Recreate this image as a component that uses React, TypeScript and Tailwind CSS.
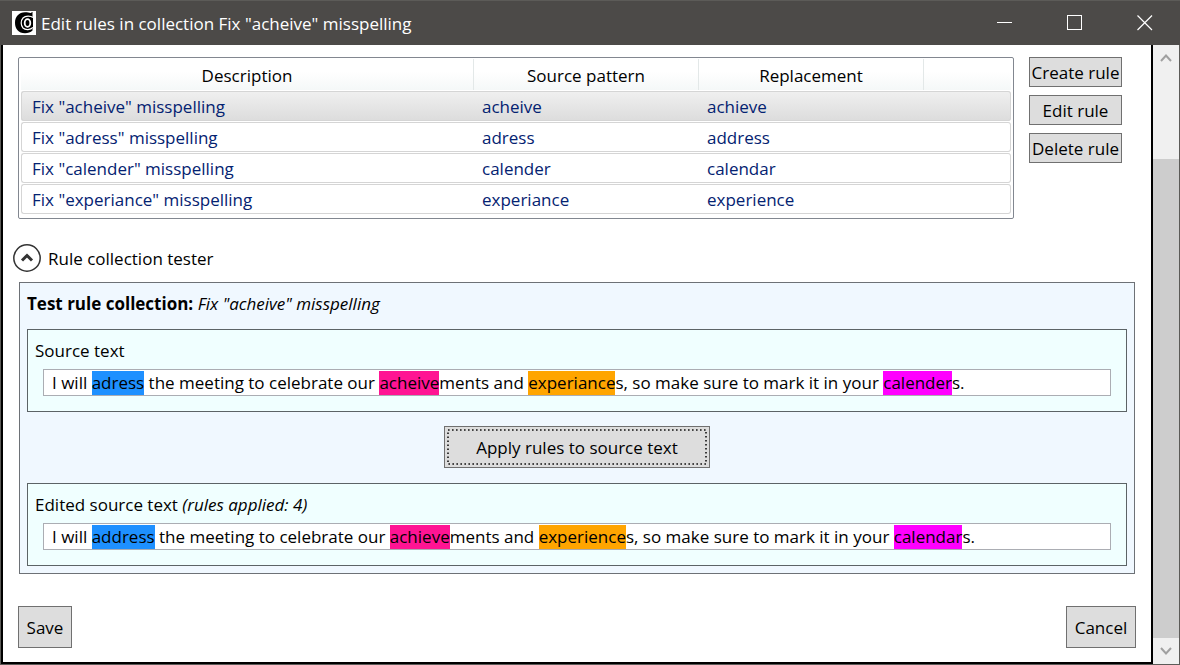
import { useState, type ReactNode } from "react";

const rules = [
  { description: 'Fix "acheive" misspelling', source: "acheive", replacement: "achieve" },
  { description: 'Fix "adress" misspelling', source: "adress", replacement: "address" },
  { description: 'Fix "calender" misspelling', source: "calender", replacement: "calendar" },
  { description: 'Fix "experiance" misspelling', source: "experiance", replacement: "experience" },
];

function AppIcon() {
  return (
    <svg viewBox="0 0 24 24" className="size-6 shrink-0 bg-white" aria-hidden="true">
      <path
        d="M20.500 1V7H10V17.500H20.500V19.500C18.500 21.500 16 22.200 13 22.200C6.500 22.200 3 18 3 11.800C3 5.500 7 1.300 13 1.300C15.500 1.300 17 2 18.500 2C19.300 2 19.700 1.500 19.800 1Z"
        fill="#000"
      />
      <path d="M9 6H21V18H9Z" fill="#000" />
      <path
        d="M21 6.500C19 4.800 13.500 4.300 11 7C8.500 9.800 8.700 14.500 11 17C13.500 19.500 18.500 19 21 16.500"
        fill="none"
        stroke="#fff"
        strokeWidth="1.200"
      />
      <ellipse cx="15.500" cy="12" rx="2.800" ry="3.800" fill="none" stroke="#fff" strokeWidth="1.800" />
    </svg>
  );
}

function TitleBar() {
  const button = "flex w-[70px] items-center justify-center self-stretch";
  return (
    <header className="flex h-[45px] shrink-0 items-center border-t border-[#5c5b58] bg-[#4c4a48] pl-3 text-white">
      <AppIcon />
      <h1 className="ml-[5px] flex-1 whitespace-nowrap pt-px">Edit rules in collection Fix "acheive" misspelling</h1>
      <button type="button" aria-label="Minimize" className={button}>
        <svg viewBox="0 0 16 16" className="size-4" shapeRendering="crispEdges">
          <path d="M0 7.500H15" stroke="#fff" />
        </svg>
      </button>
      <button type="button" aria-label="Maximize" className={button}>
        <svg viewBox="0 0 16 16" className="size-4" shapeRendering="crispEdges">
          <path d="M-.5.5h14v14H-.5z" fill="none" stroke="#fff" overflow="visible" transform="translate(.5 0)" />
        </svg>
      </button>
      <button type="button" aria-label="Close" className={button}>
        <svg viewBox="0 0 16 16" className="size-4">
          <path d="M.5.5l14.500 14.500M15 .5L.5 15" stroke="#fff" strokeWidth="1.200" />
        </svg>
      </button>
    </header>
  );
}

function RuleTable() {
  const [selected, setSelected] = useState(0);
  const head = "h-[31px] border-r border-[#e3e8e8] p-0 pt-0.5 text-center font-normal";
  const cell = "h-[30px] border-y border-[#d5d5d5] p-0 pt-px pl-2";
  return (
    <div className="min-w-0 flex-1 rounded-xs border border-[#828790] px-0.5 pb-[3px]">
      <table className="w-full table-fixed border-separate border-spacing-x-0 border-spacing-y-px">
        <colgroup>
          <col className="w-[453px]" />
          <col className="w-[225px]" />
          <col className="w-[225px]" />
          <col />
        </colgroup>
        <thead>
          <tr className="bg-linear-to-b from-white from-40% to-[#f5f8f8]">
            <th scope="col" className={head}>Description</th>
            <th scope="col" className={head}>Source pattern</th>
            <th scope="col" className={head}>Replacement</th>
            <td />
          </tr>
        </thead>
        <tbody className="text-[#042271]">
          {rules.map((rule, i) => (
            <tr
              key={rule.source}
              onClick={() => setSelected(i)}
              aria-selected={i === selected}
              className={i === selected ? "bg-linear-to-b from-[#f0f0f0] to-[#dcdcdc]" : "bg-white"}
            >
              <td className="h-[30px] rounded-l-[3px] border-y border-l border-[#d5d5d5] p-0 pt-px pl-2.5">
                {rule.description}
              </td>
              <td className={cell}>{rule.source}</td>
              <td className={cell}>{rule.replacement}</td>
              <td className={cell + " rounded-r-[3px] border-r"} />
            </tr>
          ))}
        </tbody>
      </table>
    </div>
  );
}

function SideButton({ children }: { children: ReactNode }) {
  return (
    <button
      type="button"
      className="flex h-[30px] items-center justify-center whitespace-nowrap border border-[#707070] bg-[#dddddd] pt-0.5"
    >
      {children}
    </button>
  );
}

function Highlight({ color, children }: { color: string; children: ReactNode }) {
  return <mark className={"inline-block h-6 text-black " + color}>{children}</mark>;
}

function TextPanel({ id, label, editable, words }: {
  id: string;
  label: ReactNode;
  editable: boolean;
  words: [string, string, string, string];
}) {
  return (
    <section className="border border-[#5c6366] bg-[#f0ffff] px-[7px] pt-[9px] pb-[15px]">
      <div id={id} className="leading-6">{label}</div>
      <div
        role="textbox"
        aria-labelledby={id}
        aria-readonly={!editable}
        contentEditable={editable}
        suppressContentEditableWarning
        className="mx-2 mt-1.5 h-[27px] overflow-hidden whitespace-nowrap border border-[#abadb3] bg-white pt-px pl-2 leading-6"
      >
        I will <Highlight color="bg-[#1e90ff]">{words[0]}</Highlight> the meeting to celebrate our{" "}
        <Highlight color="bg-[#ff1493]">{words[1]}</Highlight>ments and{" "}
        <Highlight color="bg-[#ffa500]">{words[2]}</Highlight>s, so make sure to mark it in your{" "}
        <Highlight color="bg-[#ff00ff]">{words[3]}</Highlight>s.
      </div>
    </section>
  );
}

function Tester() {
  const [open, setOpen] = useState(true);
  return (
    <div className="mt-6">
      <button
        type="button"
        aria-expanded={open}
        onClick={() => setOpen(!open)}
        className="-ml-[5px] flex h-[30px] items-center gap-[7px]"
      >
        <svg viewBox="0 0 28 28" className="size-7" fill="none" stroke="#333">
          <circle cx="14" cy="14" r="13.200" strokeWidth="1.500" />
          <path d="M9 16.500l5-5 5 5" strokeWidth="3" />
        </svg>
        <span className="pt-0.5">Rule collection tester</span>
      </button>
      {open && (
        <div className="mt-[9px] ml-px mr-4 border border-[#6d7176] bg-[#f0f8ff] p-[7px]">
          <p className="mt-0.5 mb-[13px] leading-6">
            <strong className="font-bold">Test rule collection:</strong> <em>Fix "acheive" misspelling</em>
          </p>
          <TextPanel
            id="source-label"
            label="Source text"
            editable
            words={["adress", "acheive", "experiance", "calender"]}
          />
          <div className="mt-3.5 mb-[15px] flex justify-center">
            <button type="button" className="relative h-[42px] w-[266px] border border-[#707070] bg-[#dddddd] pt-0.5">
              <svg className="absolute inset-[2px] h-9 w-[260px]" aria-hidden="true">
                <rect x="1" y="1" width="258" height="34" fill="none" stroke="#111" strokeWidth="1.600" strokeDasharray="1.600 2.400" />
              </svg>
              Apply rules to source text
            </button>
          </div>
          <TextPanel
            id="edited-label"
            label={<>Edited source text <em>(rules applied: 4)</em></>}
            editable={false}
            words={["address", "achieve", "experience", "calendar"]}
          />
        </div>
      )}
    </div>
  );
}

function ScrollBar() {
  const button = "flex h-[26px] shrink-0 items-center justify-center";
  return (
    <div className="flex w-[26px] shrink-0 flex-col bg-[#f0f0f0]">
      <button type="button" aria-label="Scroll up" className={button}>
        <svg viewBox="0 0 12 10" className="h-2.5 w-3" fill="none" stroke="#a0a0a0" strokeWidth="2">
          <path d="M1 8l5-5.500L11 8" />
        </svg>
      </button>
      <div className="flex flex-1 flex-col">
        <div className="grow-[88]" />
        <div className="grow-[479] bg-[#cdcdcd]" />
      </div>
      <button type="button" aria-label="Scroll down" className={button}>
        <svg viewBox="0 0 12 10" className="h-2.5 w-3" fill="none" stroke="#a0a0a0" strokeWidth="2">
          <path d="M1 2l5 5.500L11 2" />
        </svg>
      </button>
    </div>
  );
}

export default function App() {
  const footerButton = "h-[42px] border border-[#707070] bg-[#dddddd] pt-0.5";
  return (
    <div className="flex min-h-screen flex-col bg-white font-['Open_Sans','Noto_Sans',sans-serif] text-[17px] leading-6 text-black">
      <TitleBar />
      <div className="flex flex-1 border-r border-b border-l border-[#5c5b58]">
        <main className="flex min-w-0 flex-1 flex-col border-r-2 border-b-2 border-l-2 border-black pt-3 pb-[14px] pl-[15px]">
          <div className="flex items-start gap-[15px] pr-[29px]">
            <RuleTable />
            <div className="flex w-[93px] flex-col gap-2">
              <SideButton>Create rule</SideButton>
              <SideButton>Edit rule</SideButton>
              <SideButton>Delete rule</SideButton>
            </div>
          </div>
          <Tester />
          <div className="mt-auto flex justify-between pr-[15px]">
            <button type="button" className={footerButton + " w-[54px]"}>Save</button>
            <button type="button" className={footerButton + " w-[70px]"}>Cancel</button>
          </div>
        </main>
        <ScrollBar />
      </div>
    </div>
  );
}
